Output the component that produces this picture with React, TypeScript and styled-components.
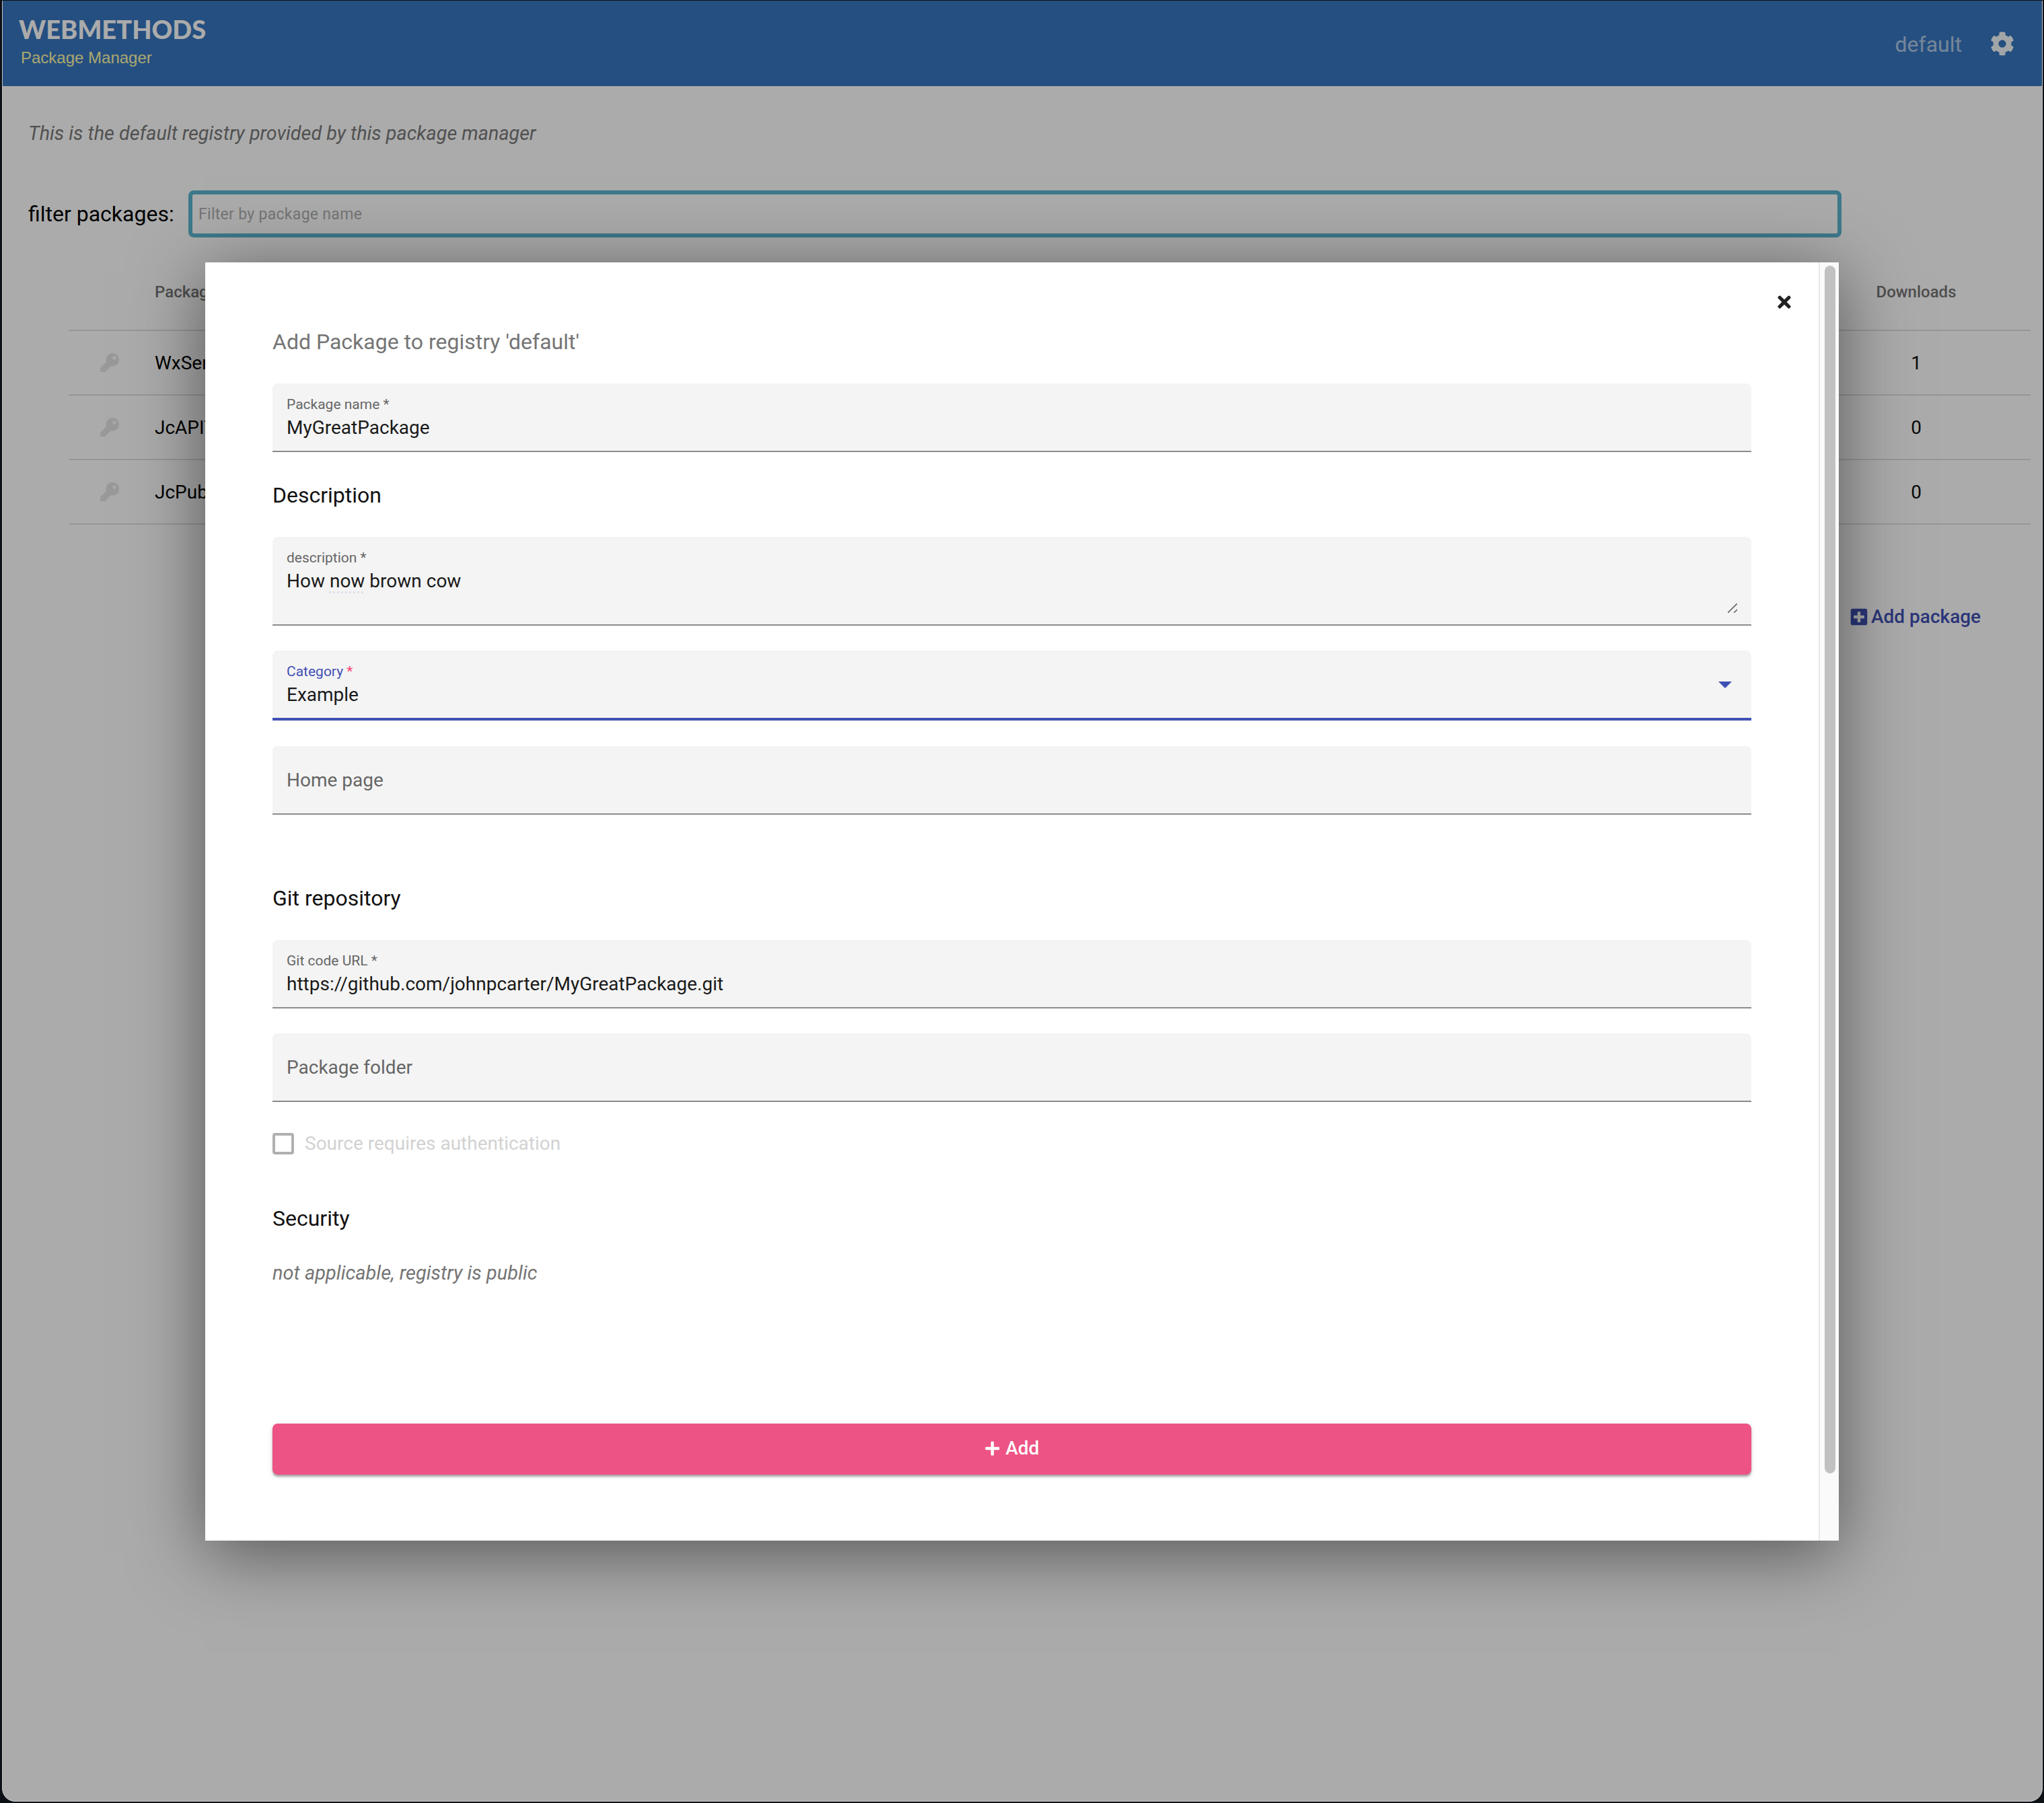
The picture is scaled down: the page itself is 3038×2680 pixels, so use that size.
import React from 'react';
import styled, { createGlobalStyle } from 'styled-components';
import { FaCog, FaKey, FaPlus, FaPlusSquare, FaTimes } from 'react-icons/fa';

const rows = [
  { name: 'WxServices', downloads: 1 },
  { name: 'JcAPITools', downloads: 0 },
  { name: 'JcPublicTools', downloads: 0 },
];

const App: React.FC = () => (
  <Screen>
    <GlobalStyle />
    <AppWindow>
      <Header>
        <Brand>
          <BrandName>WEBMETHODS</BrandName>
          <BrandSub>Package Manager</BrandSub>
        </Brand>
        <HeaderRight>
          <RegistryName>default</RegistryName>
          <FaCog />
        </HeaderRight>
      </Header>
      <Page>
        <Intro>This is the default registry provided by this package manager</Intro>
        <FilterRow>
          <FilterLabel>filter packages:</FilterLabel>
          <FilterInput>Filter by package name</FilterInput>
        </FilterRow>
        <Table>
          <HeadRow>
            <span />
            <HeadCell>Package</HeadCell>
            <HeadCell $center>Downloads</HeadCell>
          </HeadRow>
          {rows.map((row) => (
            <Row key={row.name}>
              <KeyCell>
                <FaKey />
              </KeyCell>
              <span>{row.name}</span>
              <Count>{row.downloads}</Count>
            </Row>
          ))}
        </Table>
        <AddLink>
          <FaPlusSquare />
          Add package
        </AddLink>
      </Page>
      <Overlay>
        <Modal>
          <ModalBody>
            <CloseButton>
              <FaTimes />
            </CloseButton>
            <ModalTitle>Add Package to registry 'default'</ModalTitle>
            <Field $top={42}>
              <FieldLabel>Package name *</FieldLabel>
              <FieldValue>MyGreatPackage</FieldValue>
            </Field>
            <SectionTitle $top={44}>Description</SectionTitle>
            <Field $top={42} $height={132}>
              <FieldLabel>description *</FieldLabel>
              <FieldValue>
                How <Spelled>now</Spelled> brown cow
              </FieldValue>
              <ResizeGrip viewBox="0 0 14 14">
                <path d="M0 14L14 0M9 14L14 9" />
              </ResizeGrip>
            </Field>
            <Field $top={37} $height={104} $focused>
              <FieldLabel $focused>
                Category <Required>*</Required>
              </FieldLabel>
              <FieldValue>Example</FieldValue>
              <SelectArrow />
            </Field>
            <Field $top={38}>
              <Placeholder>Home page</Placeholder>
            </Field>
            <SectionTitle $top={104}>Git repository</SectionTitle>
            <Field $top={42}>
              <FieldLabel>Git code URL *</FieldLabel>
              <FieldValue>https://github.com/johnpcarter/MyGreatPackage.git</FieldValue>
            </Field>
            <Field $top={37}>
              <Placeholder>Package folder</Placeholder>
            </Field>
            <CheckRow>
              <CheckBox />
              <CheckLabel>Source requires authentication</CheckLabel>
            </CheckRow>
            <SectionTitle $top={75}>Security</SectionTitle>
            <Note>not applicable, registry is public</Note>
            <AddButton>
              <FaPlus />
              Add
            </AddButton>
          </ModalBody>
          <ScrollTrack>
            <ScrollThumb />
          </ScrollTrack>
        </Modal>
      </Overlay>
    </AppWindow>
  </Screen>
);

const GlobalStyle = createGlobalStyle`
  html, body {
    margin: 0;
    padding: 0;
    background: #0d1117;
  }
  * {
    box-sizing: border-box;
  }
`;

const Screen = styled.div`
  width: 3038px;
  height: 2680px;
  padding: 1px 2px 2px 3px;
  background: #0d1117;
  font-family: Roboto, 'Liberation Sans', sans-serif;
`;

const AppWindow = styled.div`
  position: relative;
  height: 100%;
  overflow: hidden;
  background: #fff;
  border: 1px solid #c4c4c4;
  border-top: 0;
  border-radius: 0 0 20px 20px;
`;

const Header = styled.header`
  display: flex;
  align-items: center;
  justify-content: space-between;
  height: 127px;
  padding: 0 41px 0 24px;
  background: #3776bf;
`;

const Brand = styled.div`
  display: flex;
  flex-direction: column;
  padding-bottom: 8px;
`;

const BrandName = styled.div`
  font-family: Lato, sans-serif;
  font-size: 38px;
  line-height: 44px;
  font-weight: 900;
  color: #fff;
`;

const BrandSub = styled.div`
  margin: 7px 0 0 3px;
  font-family: 'Liberation Sans', sans-serif;
  font-size: 24px;
  line-height: 28px;
  color: #fff8a8;
`;

const HeaderRight = styled.div`
  display: flex;
  align-items: center;
  gap: 42px;
  color: #fff;
  svg {
    width: 36px;
    height: 36px;
    opacity: 0.95;
  }
`;

const RegistryName = styled.span`
  padding-top: 2px;
  font-size: 32px;
  opacity: 0.6;
`;

const Page = styled.main`
  padding: 52px 17px 0 38px;
`;

const Intro = styled.div`
  font-size: 28.8px;
  line-height: 36px;
  font-style: italic;
  color: #7a7a7a;
`;

const FilterRow = styled.div`
  display: flex;
  align-items: center;
  margin-top: 67px;
`;

const FilterLabel = styled.label`
  width: 238px;
  font-size: 32px;
  color: #000;
`;

const FilterInput = styled.div`
  display: flex;
  align-items: center;
  width: 2457px;
  height: 70px;
  padding-left: 9px;
  border: 6px solid #5bb5cf;
  border-radius: 8px;
  font-size: 23px;
  letter-spacing: 0.3px;
  color: #aeaeae;
`;

const Table = styled.div`
  margin: 46px 0 0 60px;
`;

const tableColumns = `
  display: grid;
  grid-template-columns: 128px 1fr 340px;
  align-items: center;
`;

const HeadRow = styled.div`
  ${tableColumns}
  height: 93px;
  padding-bottom: 22px;
  border-bottom: 2px solid rgba(0, 0, 0, 0.12);
`;

const HeadCell = styled.span<{ $center?: boolean }>`
  font-size: 24px;
  font-weight: 500;
  color: #757575;
  text-align: ${({ $center }) => ($center ? 'center' : 'left')};
`;

const Row = styled.div`
  ${tableColumns}
  height: 96px;
  border-bottom: 2px solid rgba(0, 0, 0, 0.12);
  font-size: 28px;
  color: #000;
`;

const KeyCell = styled.span`
  display: flex;
  padding-left: 47px;
  color: #e4e4e4;
  svg {
    width: 28px;
    height: 28px;
  }
`;

const Count = styled.span`
  text-align: center;
  color: #111;
`;

const AddLink = styled.div`
  display: flex;
  align-items: center;
  gap: 5px;
  margin: 120px 0 0 2708px;
  font-size: 28px;
  font-weight: 500;
  color: #3f51b5;
  white-space: nowrap;
  svg {
    width: 26px;
    height: 28px;
  }
`;

const Overlay = styled.div`
  position: absolute;
  inset: 0;
  background: rgba(0, 0, 0, 0.33);
`;

const Modal = styled.div`
  position: absolute;
  top: 389px;
  left: 301px;
  display: flex;
  width: 2428px;
  height: 1900px;
  background: #fff;
  box-shadow: 0 18px 100px rgba(0, 0, 0, 0.5);
`;

const ModalBody = styled.div`
  position: relative;
  flex: 1;
  padding: 98px 100px 0;
`;

const CloseButton = styled.div`
  position: absolute;
  top: 45px;
  right: 37px;
  display: flex;
  color: #212121;
  svg {
    width: 28px;
    height: 28px;
  }
`;

const ModalTitle = styled.div`
  font-size: 32px;
  line-height: 40px;
  color: #757575;
`;

const SectionTitle = styled.div<{ $top: number }>`
  margin-top: ${({ $top }) => $top}px;
  font-size: 32px;
  line-height: 40px;
  color: #111;
`;

const Field = styled.div<{ $top: number; $height?: number; $focused?: boolean }>`
  position: relative;
  height: ${({ $height }) => $height ?? 102}px;
  margin-top: ${({ $top }) => $top}px;
  padding: 20px 21px 0;
  background: #f4f4f4;
  border-radius: 8px 8px 0 0;
  border-bottom: ${({ $focused }) => ($focused ? '4px solid #3f51b5' : '2px solid #8b8b8b')};
`;

const FieldLabel = styled.div<{ $focused?: boolean }>`
  font-size: 21px;
  line-height: 23px;
  color: ${({ $focused }) => ($focused ? '#3f51b5' : '#666')};
`;

const Required = styled.span`
  color: #f44374;
`;

const FieldValue = styled.div`
  margin-top: 5px;
  font-size: 28px;
  line-height: 36px;
  color: #1a1a1a;
`;

const Spelled = styled.span`
  text-decoration: underline dotted #dde0e8;
  text-underline-offset: 6px;
`;

const Placeholder = styled.div`
  padding-top: 11px;
  font-size: 28px;
  line-height: 40px;
  color: #666;
`;

const ResizeGrip = styled.svg`
  position: absolute;
  right: 21px;
  bottom: 17px;
  width: 14px;
  height: 14px;
  path {
    fill: none;
    stroke: #666;
    stroke-width: 1.6;
  }
`;

const SelectArrow = styled.span`
  position: absolute;
  top: 46px;
  right: 29px;
  border-left: 10px solid transparent;
  border-right: 10px solid transparent;
  border-top: 10px solid #3f51b5;
`;

const CheckRow = styled.div`
  display: flex;
  align-items: center;
  gap: 16px;
  margin-top: 46px;
`;

const CheckBox = styled.span`
  width: 32px;
  height: 32px;
  border: 4px solid #b0b0b0;
  border-radius: 4px;
`;

const CheckLabel = styled.span`
  font-size: 28px;
  line-height: 32px;
  color: #d2d2d2;
`;

const Note = styled.div`
  margin-top: 41px;
  font-size: 29px;
  line-height: 40px;
  font-style: italic;
  color: #757575;
`;

const AddButton = styled.button`
  display: flex;
  align-items: center;
  justify-content: center;
  gap: 7px;
  width: 100%;
  height: 76px;
  margin-top: 204px;
  padding-bottom: 4px;
  border: 0;
  border-radius: 8px;
  background: #ed5384;
  box-shadow: 0 3px 3px rgba(0, 0, 0, 0.3), 0 2px 10px rgba(0, 0, 0, 0.1);
  font-family: inherit;
  font-size: 28px;
  font-weight: 500;
  color: #fff;
  svg {
    width: 24px;
    height: 24px;
  }
`;

const ScrollTrack = styled.div`
  width: 30px;
  padding: 5px 6px 0 7px;
  background: #fafafa;
  border-left: 2px solid #e8e8e8;
`;

const ScrollThumb = styled.div`
  width: 16px;
  height: 1795px;
  border-radius: 8px;
  background: #c1c1c1;
`;

export default App;
